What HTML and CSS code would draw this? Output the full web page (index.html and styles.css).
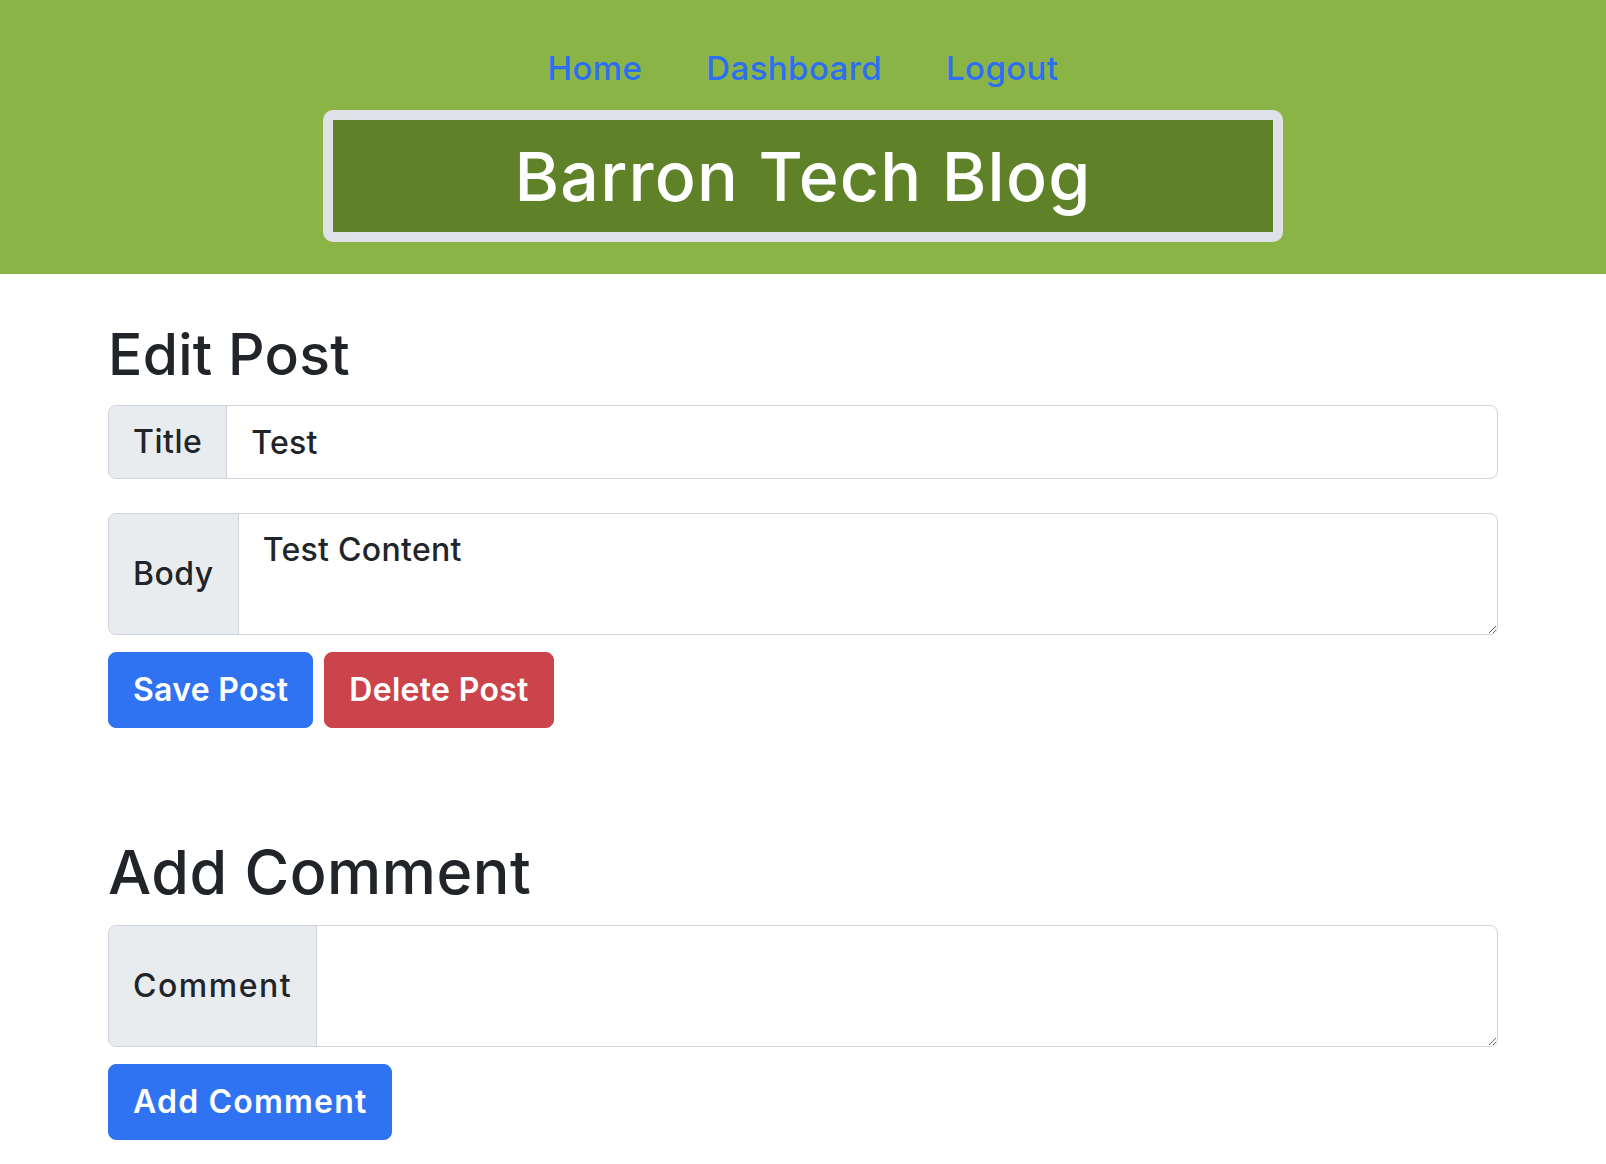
FILE: index.html
```html
<!DOCTYPE html>
<html lang="en">
<head>
<meta charset="utf-8">
<title>Barron Tech Blog</title>
<link rel="stylesheet" href="styles.css">
</head>
<body>
<header class="site-header">
  <nav class="nav">
    <a class="nav-link" href="#">Home</a>
    <a class="nav-link" href="#">Dashboard</a>
    <a class="nav-link" href="#">Logout</a>
  </nav>
  <div class="brand-box">
    <h1 class="brand">Barron Tech Blog</h1>
  </div>
</header>
<main class="container">
  <h2 class="heading heading-edit">Edit Post</h2>
  <form class="form">
    <div class="input-group group-title">
      <span class="group-label">Title</span>
      <input class="control" type="text" value="Test">
    </div>
    <div class="input-group group-body">
      <span class="group-label">Body</span>
      <textarea class="control control-area" rows="2">Test Content</textarea>
    </div>
    <div class="actions">
      <button class="btn btn-primary" type="button">Save Post</button>
      <button class="btn btn-danger" type="button">Delete Post</button>
    </div>
  </form>
  <h2 class="heading heading-comment">Add Comment</h2>
  <form class="form">
    <div class="input-group group-body">
      <span class="group-label label-wide">Comment</span>
      <textarea class="control control-area" rows="2"></textarea>
    </div>
    <div class="actions">
      <button class="btn btn-primary btn-wide" type="button">Add Comment</button>
    </div>
  </form>
</main>
</body>
</html>
```
FILE: styles.css
```css
* { box-sizing: border-box; }

html, body {
  margin: 0;
  padding: 0;
  background: #ffffff;
}

body {
  font-family: Inter, "Open Sans", sans-serif;
  color: #212529;
  font-weight: 500;
}

.site-header {
  background: #8bb447;
  padding: 28px 0 32px;
  display: flex;
  flex-direction: column;
  align-items: center;
}

.nav {
  display: flex;
  justify-content: center;
}

.nav-link {
  display: block;
  padding: 16px 32px;
  font-size: 33px;
  line-height: 48px;
  font-weight: 500;
  letter-spacing: 0.4px;
  color: #2c6ff2;
  text-decoration: none;
}

.brand-box {
  margin-top: 2px;
  width: 960px;
  height: 132px;
  border: 10px solid #dee2e6;
  border-radius: 10px;
  background: #5f8228;
  display: flex;
  align-items: center;
  justify-content: center;
}

.brand {
  margin: 0;
  color: #ffffff;
  font-size: 68px;
  line-height: 1;
  font-weight: 500;
  letter-spacing: 1.2px;
}

.container {
  width: 1390px;
  margin: 0 auto;
}

.heading {
  margin: 0;
  font-weight: 500;
  color: #212529;
}

.heading-edit {
  margin-top: 47px;
  margin-bottom: 16px;
  font-size: 57px;
  line-height: 68px;
  letter-spacing: 0.3px;
}

.heading-comment {
  margin-top: 108px;
  margin-bottom: 16px;
  font-size: 61px;
  line-height: 73px;
  letter-spacing: 0.5px;
}

.form { margin: 0; }

.input-group {
  display: flex;
  align-items: stretch;
  width: 100%;
}

.group-title { margin-bottom: 34px; }
.group-body { margin-bottom: 17px; }

.group-label {
  display: flex;
  align-items: center;
  padding: 12px 24px;
  font-size: 32px;
  line-height: 48px;
  font-weight: 500;
  letter-spacing: 0.5px;
  color: #212529;
  background: #e9ecef;
  border: 1px solid #ced4da;
  border-radius: 8px 0 0 8px;
  white-space: nowrap;
}

.label-wide { letter-spacing: 1.5px; }

.control {
  flex: 1 1 auto;
  min-width: 0;
  margin: 0 0 0 -1px;
  padding: 12px 24px;
  font-family: inherit;
  font-size: 32px;
  line-height: 48px;
  font-weight: 500;
  letter-spacing: 0.3px;
  color: #212529;
  background: #ffffff;
  border: 1px solid #ced4da;
  border-radius: 0 8px 8px 0;
  height: 74px;
  outline: none;
}

.control-area {
  height: 122px;
  resize: vertical;
  display: block;
}

.actions {
  display: flex;
  gap: 11px;
}

.btn {
  font-family: inherit;
  font-size: 32px;
  line-height: 48px;
  font-weight: 600;
  letter-spacing: 0.3px;
  color: #ffffff;
  padding: 13px 24px;
  border: 1px solid transparent;
  border-radius: 8px;
  cursor: pointer;
}

.btn-wide { letter-spacing: 1.2px; }

.btn-primary {
  background: #2f73f3;
  border-color: #2f73f3;
}

.btn-danger {
  background: #cb444b;
  border-color: #cb444b;
}
```
